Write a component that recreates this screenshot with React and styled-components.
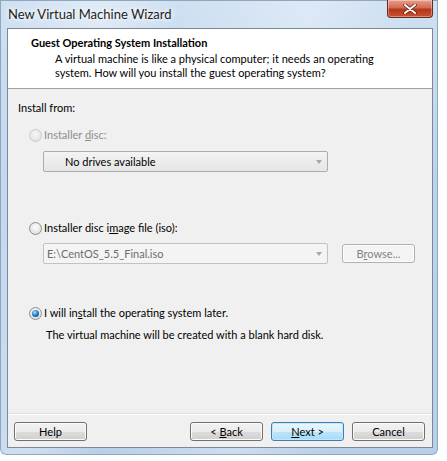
import styled, { createGlobalStyle } from "styled-components";

const Global = createGlobalStyle`
  html, body { margin: 0; padding: 0; background: #ffffff; }
  body { font-family: Lato, "Noto Sans", sans-serif; font-size: 11px; color: #000; }
`;

const Window = styled.div`
  width: 438px;
  height: 455px;
  box-sizing: border-box;
  padding: 0 5px 7px 7px;
  display: flex;
  flex-direction: column;
  border-radius: 0 0 6px 6px;
  background:
    linear-gradient(100deg, rgba(255,255,255,0) 0%, rgba(255,255,255,0.35) 20%, rgba(255,255,255,0) 35%, rgba(255,255,255,0.3) 60%, rgba(255,255,255,0) 80%),
    linear-gradient(180deg, #cfe0f2 0%, #bcd3ec 40%, #b7cfe9 100%);
  box-shadow: inset 0 0 0 1px #8fa6bf;
`;

const TitleBar = styled.div`
  height: 28px;
  display: flex;
  align-items: flex-start;
  justify-content: space-between;
`;

const Title = styled.div`
  font-size: 13px;
  line-height: 28px;
  margin-left: 1px;
  color: #1e1e1e;
  text-shadow: 0 0 8px #fff, 0 0 4px #fff;
`;

const CloseButton = styled.div`
  width: 46px;
  height: 18px;
  box-sizing: border-box;
  border: 1px solid #6b2a1e;
  border-top: none;
  border-radius: 0 0 4px 4px;
  background: linear-gradient(180deg, #e8a08c 0%, #d26b52 45%, #b6371c 55%, #c8502f 100%);
  display: flex;
  align-items: center;
  justify-content: center;
  box-shadow: inset 0 0 0 1px rgba(255,255,255,0.35);
`;

const Client = styled.div`
  flex: 1;
  display: flex;
  flex-direction: column;
  border: 1px solid #7d8896;
  background: #f0f0f0;
`;

const Header = styled.div`
  height: 60px;
  background: #ffffff;
  border-bottom: 1px solid #a0a0a0;
  box-sizing: border-box;
  padding: 7px 0 0 23px;
`;

const HeaderTitle = styled.div`
  font-weight: bold;
  line-height: 14px;
`;

const HeaderText = styled.div`
  margin-left: 24px;
  margin-top: 2px;
  line-height: 14px;
  width: 330px;
`;

const Body = styled.div`
  flex: 1;
  padding: 12px 0 0 10px;
  display: flex;
  flex-direction: column;
`;

const Label = styled.div`
  line-height: 14px;
`;

const OptionRow = styled.div`
  display: flex;
  align-items: center;
  gap: 2px;
  margin-left: 11px;
  margin-top: ${(p) => p.$top || 0}px;
  line-height: 14px;
  color: ${(p) => (p.$disabled ? "#8d8d8d" : "#000")};
`;

const Radio = styled.span`
  width: 13px;
  height: 13px;
  border-radius: 50%;
  box-sizing: border-box;
  border: 1px solid ${(p) => (p.$disabled ? "#cacaca" : "#8e8f8f")};
  background: ${(p) =>
    p.$disabled
      ? "radial-gradient(circle at 50% 40%, #f6f6f6, #dedede)"
      : "radial-gradient(circle at 50% 40%, #ffffff, #d4d4d4)"};
  display: flex;
  align-items: center;
  justify-content: center;
  flex-shrink: 0;
  &::after {
    content: "";
    display: ${(p) => (p.$checked ? "block" : "none")};
    width: 7px;
    height: 7px;
    border-radius: 50%;
    background: radial-gradient(circle at 40% 35%, #a6e4ff, #1b6fb5 55%, #0d3e7a);
  }
`;

const Indented = styled.div`
  margin-left: 25px;
  margin-top: ${(p) => p.$top || 0}px;
  display: flex;
  gap: 14px;
  align-items: center;
`;

const Combo = styled.div`
  width: 285px;
  height: 21px;
  box-sizing: border-box;
  border: 1px solid ${(p) => (p.$button ? "#acacac" : "#c2c2c2")};
  border-radius: 2px;
  background: ${(p) =>
    p.$button ? "linear-gradient(180deg, #f4f4f4, #ececec 50%, #e6e6e6)" : "#f4f4f4"};
  display: flex;
  align-items: center;
  padding-left: ${(p) => (p.$button ? 21 : 3)}px;
  color: ${(p) => (p.$button ? "#000" : "#6d6d6d")};
`;

const ComboValue = styled.span`
  flex: 1;
`;

const Arrow = styled.span`
  width: 0;
  height: 0;
  margin-right: 5px;
  border-left: 3.5px solid transparent;
  border-right: 3.5px solid transparent;
  border-top: 4px solid #a8a8a8;
`;

const Button = styled.button`
  width: 73px;
  height: 19px;
  box-sizing: border-box;
  font: inherit;
  padding: 0;
  border-radius: 3px;
  border: 1px solid ${(p) => (p.$default ? "#3c7fb1" : p.$disabled ? "#adb2b5" : "#707070")};
  background: ${(p) =>
    p.$disabled
      ? "#f4f4f4"
      : p.$default
      ? "linear-gradient(180deg, #eaf6fd 0%, #d9f0fc 50%, #bee6fd 51%, #a7d9f5 100%)"
      : "linear-gradient(180deg, #f2f2f2 0%, #ebebeb 50%, #dddddd 51%, #cfcfcf 100%)"};
  box-shadow: inset 0 0 0 1px ${(p) => (p.$default ? "#c5e6f8" : "#fcfcfc")};
  color: ${(p) => (p.$disabled ? "#838383" : "#000")};
  line-height: 17px;
`;

const Description = styled.div`
  margin-left: 28px;
  margin-top: 8px;
  line-height: 14px;
`;

const Footer = styled.div`
  height: 34px;
  border-top: 1px solid #dfdfdf;
  box-shadow: inset 0 1px 0 #fff;
  box-sizing: border-box;
  padding: 8px 7px 0 6px;
  display: flex;
  gap: 8px;
`;

const Spacer = styled.div`
  flex: 1;
`;

const Key = styled.span`
  text-decoration: underline;
`;

export default function App() {
  return (
    <>
      <Global />
      <Window>
        <TitleBar>
          <Title>New Virtual Machine Wizard</Title>
          <CloseButton>
            <svg width="14" height="10" viewBox="0 0 14 10">
              <path d="M2 1 L12 9 M12 1 L2 9" stroke="#5a1a10" strokeWidth="3.4" strokeLinecap="round" />
              <path d="M2 1 L12 9 M12 1 L2 9" stroke="#ffffff" strokeWidth="2" strokeLinecap="round" />
            </svg>
          </CloseButton>
        </TitleBar>
        <Client>
          <Header>
            <HeaderTitle>Guest Operating System Installation</HeaderTitle>
            <HeaderText>
              A virtual machine is like a physical computer; it needs an operating system. How will
              you install the guest operating system?
            </HeaderText>
          </Header>
          <Body>
            <Label>Install from:</Label>
            <OptionRow $top={13} $disabled>
              <Radio $disabled />
              <span>
                Installer <Key>d</Key>isc:
              </span>
            </OptionRow>
            <Indented $top={9}>
              <Combo $button>
                <ComboValue>No drives available</ComboValue>
                <Arrow />
              </Combo>
            </Indented>
            <OptionRow $top={49}>
              <Radio />
              <span>
                Installer disc i<Key>m</Key>age file (iso):
              </span>
            </OptionRow>
            <Indented $top={8}>
              <Combo>
                <ComboValue>E:\CentOS_5.5_Final.iso</ComboValue>
                <Arrow />
              </Combo>
              <Button $disabled>
                B<Key>r</Key>owse...
              </Button>
            </Indented>
            <OptionRow $top={42}>
              <Radio $checked />
              <span>
                I will in<Key>s</Key>tall the operating system later.
              </span>
            </OptionRow>
            <Description>The virtual machine will be created with a blank hard disk.</Description>
          </Body>
          <Footer>
            <Button>Help</Button>
            <Spacer />
            <Button>
              &lt; <Key>B</Key>ack
            </Button>
            <Button $default>
              <Key>N</Key>ext &gt;
            </Button>
            <Button>Cancel</Button>
          </Footer>
        </Client>
      </Window>
    </>
  );
}
